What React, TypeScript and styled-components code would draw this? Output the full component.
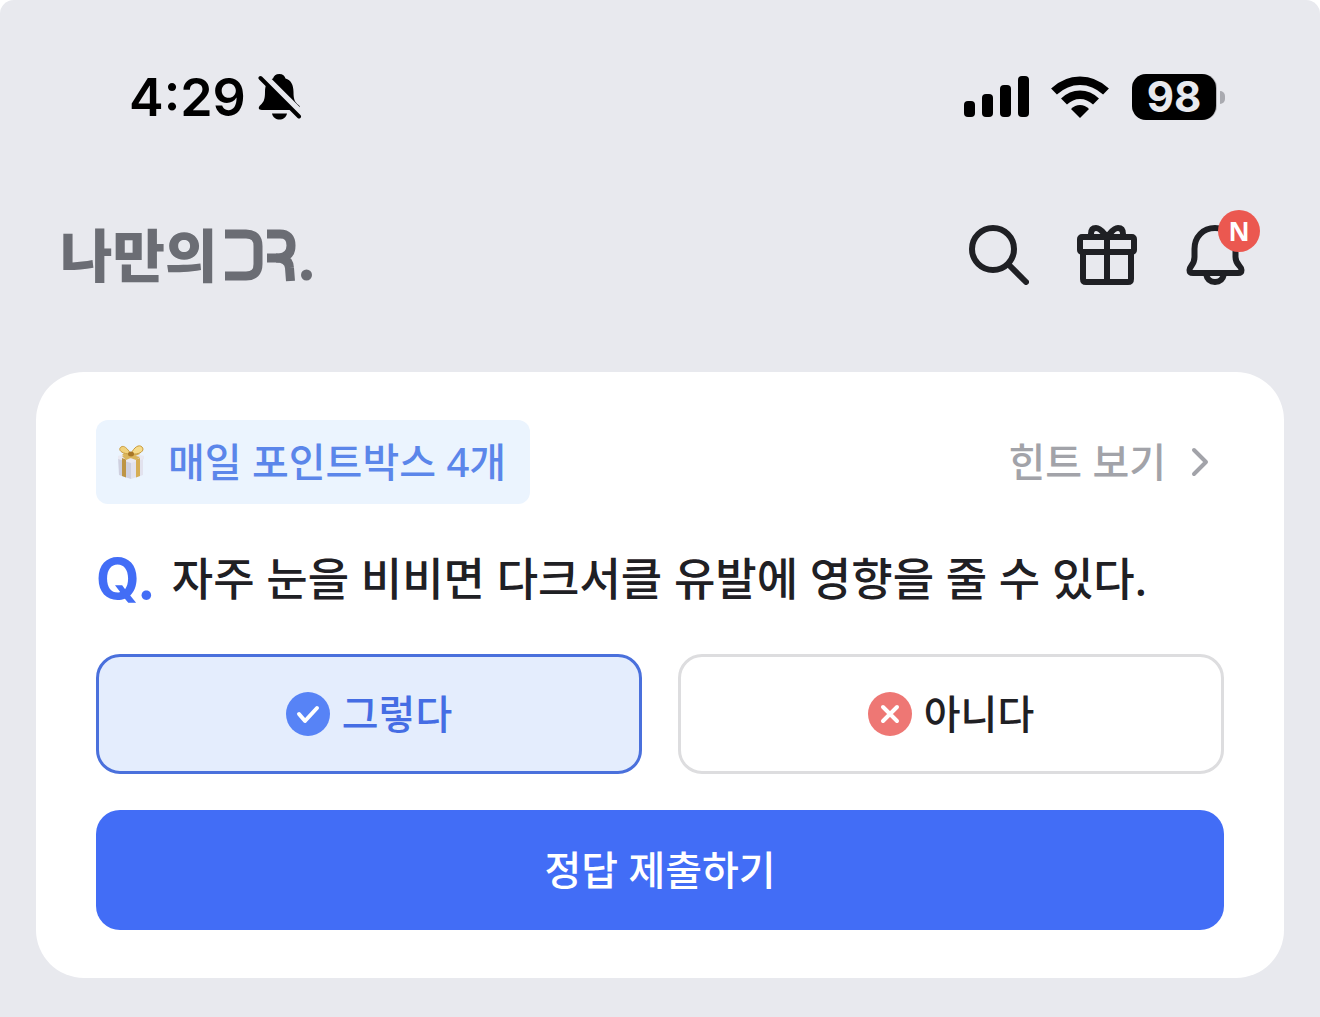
import React, { useState } from "react";
import styled, { createGlobalStyle } from "styled-components";

const color = {
  page: "#e8e9ee",
  ink: "#1f2024",
  logo: "#6b6d74",
  blue: "#426df6",
  line: "#dddddf",
  muted: "#a2a3a9",
};

const GlobalStyle = createGlobalStyle`
  *, *::before, *::after { box-sizing: border-box; }
  body {
    margin: 0;
    background: #fff;
    font-family: "Noto Sans", "Noto Sans CJK KR", sans-serif;
  }
  button { font: inherit; color: inherit; background: none; border: 0; padding: 0; cursor: pointer; }
  svg { display: block; flex: none; }
`;

const Screen = styled.div`
  min-height: 100vh;
  padding-bottom: 39px;
  background: ${color.page};
  border-radius: 14px 14px 0 0;
`;

const StatusBar = styled.div`
  display: flex;
  align-items: center;
  justify-content: space-between;
  height: 122px;
  padding: 72px 95px 0 129px;
  color: #000;
  font-family: Inter, sans-serif;
`;

const StatusGroup = styled.div<{ $gap: number }>`
  display: flex;
  align-items: center;
  gap: ${(p) => p.$gap}px;
`;

const Clock = styled.time`
  padding-top: 2px;
  font-size: 52px;
  line-height: 52px;
  font-weight: 600;
`;

const Battery = styled.div`
  display: flex;
  align-items: center;
  gap: 4px;
`;

const BatteryLevel = styled.span`
  width: 84px;
  height: 46px;
  border-radius: 14px;
  background: #000;
  box-shadow: 1px 0 0 #b4b5ba;
  color: ${color.page};
  font-size: 42px;
  line-height: 46px;
  font-weight: 700;
  text-align: center;
`;

const BatteryTip = styled.span`
  width: 5px;
  height: 13px;
  border-radius: 0 5px 5px 0;
  background: #a9aab0;
`;

const Header = styled.header`
  display: flex;
  align-items: center;
  justify-content: space-between;
  padding: 103px 75px 87px 60px;
`;

const Logo = styled.a`
  display: flex;
  align-items: center;
  gap: 8px;
  color: ${color.logo};
  font-size: 57px;
  line-height: 60px;
  font-weight: 900;
  text-decoration: none;
`;

const Actions = styled.nav`
  display: flex;
  gap: 48px;
`;

const IconButton = styled.button`
  position: relative;
  width: 60px;
  height: 60px;
  color: ${color.ink};
`;

const Badge = styled.span`
  position: absolute;
  top: -15px;
  left: 33px;
  width: 42px;
  height: 42px;
  border-radius: 50%;
  background: #eb5850;
  color: #fff;
  font-family: "Open Sans", sans-serif;
  font-size: 26px;
  line-height: 42px;
  font-weight: 700;
  text-align: center;
`;

const Card = styled.main`
  margin: 0 36px;
  padding: 48px 60px;
  border-radius: 48px;
  background: #fff;
`;

const CardTop = styled.div`
  display: flex;
  align-items: center;
  justify-content: space-between;
`;

const PointTag = styled.span`
  display: flex;
  align-items: center;
  gap: 22px;
  height: 84px;
  padding: 0 24px 0 20px;
  border-radius: 12px;
  background: #ebf4fe;
  color: #5b86ea;
  font-size: 40px;
  line-height: 60px;
  font-weight: 500;
`;

const HintLink = styled.a`
  display: flex;
  align-items: center;
  gap: 24px;
  padding-right: 14px;
  color: ${color.muted};
  font-size: 40px;
  line-height: 60px;
  font-weight: 500;
  text-decoration: none;
`;

const Question = styled.h1`
  display: flex;
  align-items: center;
  gap: 16px;
  height: 150px;
  margin: 0;
  color: ${color.ink};
  font-size: 45px;
  line-height: 60px;
  font-weight: 500;
`;

const QuestionMark = styled.span`
  color: ${color.blue};
  font-family: Inter, sans-serif;
  font-size: 56px;
  line-height: 60px;
  font-weight: 700;
`;

const QuizForm = styled.form`
  display: grid;
  gap: 36px;
`;

const Options = styled.div`
  display: grid;
  grid-template-columns: 1fr 1fr;
  gap: 36px;
`;

const Option = styled.label<{ $selected: boolean }>`
  display: flex;
  align-items: center;
  justify-content: center;
  gap: 12px;
  height: 120px;
  border: 3px solid ${(p) => (p.$selected ? "#4a70dc" : color.line)};
  border-radius: 24px;
  background: ${(p) => (p.$selected ? "#e4edfd" : "#fff")};
  color: ${(p) => (p.$selected ? "#456de4" : color.ink)};
  font-size: 40px;
  line-height: 60px;
  font-weight: 500;
  cursor: pointer;
`;

const HiddenRadio = styled.input`
  position: absolute;
  width: 1px;
  height: 1px;
  margin: 0;
  opacity: 0;
`;

const SubmitButton = styled.button`
  && {
    height: 120px;
    border-radius: 24px;
    background: ${color.blue};
    color: #fff;
    font-size: 40px;
    line-height: 60px;
    font-weight: 500;
  }
`;

const SilentIcon = () => (
  <svg width="44" height="46" viewBox="0 0 44 46" aria-label="무음">
    <path
      d="M21.300 0C24.800 0 26.800 2 27.500 4.500C33 6 35.500 11 35.500 18C35.500 26 37 28 40.500 31C43 33 42.500 36 39 36H4C0 36 0 33 2.500 31C5.500 28 7 26 7 18C7 11 9.500 6 15 4.500C15.800 2 17.800 0 21.300 0z"
      fill="#000"
    />
    <path d="M14 39.500h15c-1 4-4 6-7.500 6s-6.500-2-7.500-6z" fill="#000" />
    <path d="M4 1L44 41" stroke={color.page} strokeWidth="8" />
    <path d="M2.500 4L41 42.500" stroke="#000" strokeWidth="4" strokeLinecap="round" />
  </svg>
);

const SignalIcon = () => (
  <svg width="65" height="42" viewBox="0 0 65 42" aria-label="신호">
    <rect x="0" y="25" width="11" height="16" rx="4" />
    <rect x="18" y="18" width="11" height="23" rx="4" />
    <rect x="36" y="9" width="11" height="32" rx="4" />
    <rect x="54" y="0" width="11" height="41" rx="4" />
  </svg>
);

const WifiIcon = () => (
  <svg width="59" height="42" viewBox="0 0 59 42" aria-label="와이파이">
    <g fill="none" stroke="#000" strokeWidth="8.5">
      <path d="M3 15.5Q14.500 4.700 29 4.700T55 15.500" />
      <path d="M13 25.500Q20 18.700 29 18.700T45 25.500" />
    </g>
    <path d="M20 33Q24 29 29 29T38 33L29 42z" />
  </svg>
);

const LogoMark = () => (
  <svg width="88" height="56" viewBox="0 0 88 56" aria-label="DR.">
    <g fill="none" stroke={color.logo} strokeWidth="9">
      <path d="M0 7H21Q33 7 33 19V37Q33 49 21 49H0" />
      <path d="M42 7H55Q66 7 66 18.500T54 31H42" />
      <path d="M51 31Q64 31 64.500 41L65.500 54" />
    </g>
    <circle cx="81.500" cy="48" r="5.500" fill={color.logo} />
  </svg>
);

const LineIcon = ({ children }: { children: React.ReactNode }) => (
  <svg
    width="60"
    height="60"
    viewBox="0 0 60 60"
    fill="none"
    stroke="currentColor"
    strokeWidth="6"
    strokeLinecap="round"
    strokeLinejoin="round"
  >
    {children}
  </svg>
);

const GiftBoxPicture = () => (
  <svg width="30" height="36" viewBox="0 0 30 36" aria-hidden="true">
    <path d="M2 13L15 17V35L3 31z" fill="#cfd0df" />
    <path d="M15 17L27 13V31L15 35z" fill="#e2e2ee" />
    <path d="M2 12L15 8L28 12V15L15 19L2 15z" fill="#e9e9f2" />
    <path d="M6 14l4 1.500V33.500l-4-1.500z" fill="#bd9445" />
    <path d="M20 15.500l4-1.500v18l-4 1.500z" fill="#d6ad54" />
    <path d="M6 12L20 8l4 2L10 16zM8 9l16 4-4 3L6 11z" fill="#dab55c" />
    <path d="M15 10C11 4 8 1 5 3s-1 7 10 7z" fill="#f1d27c" stroke="#c99c3f" />
    <path d="M15 10C18 3 23 0 26 3s-1 8-11 7z" fill="#f6dc8c" stroke="#c99c3f" />
    <ellipse cx="15" cy="10" rx="3" ry="2.500" fill="#a87626" />
  </svg>
);

const Chevron = () => (
  <svg width="20" height="32" viewBox="0 0 20 32" fill="none" aria-hidden="true">
    <path d="M4 4L16 16L4 28" stroke={color.muted} strokeWidth="4" strokeLinecap="round" strokeLinejoin="round" />
  </svg>
);

const MarkIcon = ({ fill, path }: { fill: string; path: string }) => (
  <svg width="44" height="44" viewBox="0 0 44 44" fill="none" aria-hidden="true">
    <circle cx="22" cy="22" r="22" fill={fill} />
    <path d={path} stroke="#fff" strokeWidth="4" strokeLinecap="round" strokeLinejoin="round" />
  </svg>
);

const answers = [
  { id: "yes", label: "그렇다", fill: "#5783f6", path: "M13 22L19 29L31 16" },
  { id: "no", label: "아니다", fill: "#ee7774", path: "M15 15L29 29M29 15L15 29" },
];

export default function App() {
  const [answer, setAnswer] = useState("yes");

  return (
    <Screen>
      <GlobalStyle />
      <StatusBar>
        <StatusGroup $gap={12}>
          <Clock>4:29</Clock>
          <SilentIcon />
        </StatusGroup>
        <StatusGroup $gap={22}>
          <SignalIcon />
          <WifiIcon />
          <Battery>
            <BatteryLevel>98</BatteryLevel>
            <BatteryTip />
          </Battery>
        </StatusGroup>
      </StatusBar>

      <Header>
        <Logo href="#">
          나만의
          <LogoMark />
        </Logo>
        <Actions>
          <IconButton type="button" aria-label="검색">
            <LineIcon>
              <circle cx="24" cy="24" r="21" />
              <path d="M40 40L57 57" />
            </LineIcon>
          </IconButton>
          <IconButton type="button" aria-label="선물">
            <LineIcon>
              <rect x="3" y="12" width="54" height="15" rx="2" />
              <path d="M6 27V54Q6 57 9 57H51Q54 57 54 54V27M30 12V57" />
              <path d="M14 11V9Q14 3 19 3C24 3 26 8 30 12C34 8 36 3 41 3Q46 3 46 9V11" />
            </LineIcon>
          </IconButton>
          <IconButton type="button" aria-label="알림">
            <LineIcon>
              <path d="M30 3C18 3 9.500 12 9.500 24V32C9.500 40 4.500 41 4.500 45Q4.500 48 8 48H53Q56.500 48 56.500 45C56.500 41 50.500 40 50.500 32V24C50.500 12 42 3 30 3z" />
              <path d="M21 49C22 54 25 57 30 57S38 54 39 49" />
            </LineIcon>
            <Badge>N</Badge>
          </IconButton>
        </Actions>
      </Header>

      <Card>
        <CardTop>
          <PointTag>
            <GiftBoxPicture />
            매일 포인트박스 4개
          </PointTag>
          <HintLink href="#">
            힌트 보기
            <Chevron />
          </HintLink>
        </CardTop>
        <Question>
          <QuestionMark>Q.</QuestionMark>
          자주 눈을 비비면 다크서클 유발에 영향을 줄 수 있다.
        </Question>
        <QuizForm onSubmit={(e) => e.preventDefault()}>
          <Options>
            {answers.map((a) => (
              <Option key={a.id} $selected={answer === a.id}>
                <HiddenRadio
                  type="radio"
                  name="answer"
                  value={a.id}
                  checked={answer === a.id}
                  onChange={() => setAnswer(a.id)}
                />
                <MarkIcon fill={a.fill} path={a.path} />
                {a.label}
              </Option>
            ))}
          </Options>
          <SubmitButton type="submit">정답 제출하기</SubmitButton>
        </QuizForm>
      </Card>
    </Screen>
  );
}
